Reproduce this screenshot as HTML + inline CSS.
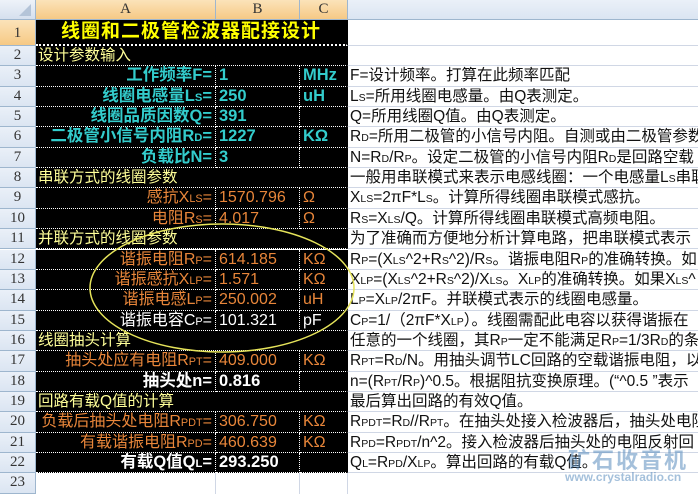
<!DOCTYPE html>
<html><head><meta charset="utf-8"><style>
*{margin:0;padding:0;box-sizing:border-box}
body{width:698px;height:490px;overflow:hidden;background:#fff;font-family:"Liberation Sans","Noto Sans CJK SC",sans-serif;position:relative}
.r{position:absolute;left:0;width:698px;display:flex}
.c{height:100%;overflow:visible;white-space:nowrap;font-size:15.5px;display:block;line-height:19px;position:relative}
.h{width:36px;background:linear-gradient(#eaf0f8,#dbe5f2);border-right:1px solid #9eb6ce;border-bottom:1px solid #9eb6ce;text-align:center;color:#333;font-family:"Liberation Serif",serif;font-size:15px}
.hs{background:linear-gradient(#fbe3b9,#f6c985);}
.a{width:180px;background:#000;border-right:1px dotted #fff;border-bottom:1px dotted #fff;text-align:right;padding-right:3px}
.b{width:84px;background:#000;border-right:1px dotted #fff;border-bottom:1px dotted #fff;padding-left:3px}
.cc{width:48px;background:#000;border-right:2px solid #000;border-bottom:1px dotted #fff;padding-left:3px}
.d{flex:1;border-bottom:1px solid #d0d7e5;padding-left:2px;color:#111;overflow:hidden;font-size:15.5px}
.sec{width:312px;background:#000;border-bottom:1px dotted #fff;color:#ffff99;padding-left:2px;border-right:2px solid #000}
.cy{color:#33cccc;font-weight:bold;font-size:16.5px}
.or{color:#e8863a;font-size:16px}
.wh{color:#fff;font-size:16px}
.whb{color:#fff;font-weight:bold;font-size:16.5px}
small{font-size:0.68em}
.top .c{line-height:19px;text-align:center;font-family:"Liberation Serif",serif;font-size:15px;color:#333}
</style></head><body>
<div class="r top" style="top:0;height:20px">
<div class="c h" style="background:linear-gradient(#eef3f9,#d5e0ee)"><svg width="12" height="12" style="position:absolute;right:4px;bottom:3px"><path d="M12 0L12 12L0 12Z" fill="#b4c4d8"/></svg></div>
<div class="c hs" style="width:180px;border-right:1px solid #9eb6ce;border-bottom:1px solid #9eb6ce">A</div>
<div class="c hs" style="width:84px;border-right:1px solid #9eb6ce;border-bottom:1px solid #9eb6ce">B</div>
<div class="c hs" style="width:48px;border-right:1px solid #9eb6ce;border-bottom:1px solid #9eb6ce">C</div>
<div class="c" style="flex:1;background:linear-gradient(#eaf0f8,#dbe5f2);border-bottom:1px solid #9eb6ce"></div>
</div>
<div class="r" style="top:20px;height:26px">
<div class="c h hs" style="line-height:26px">1</div>
<div class="c" style="width:312px;background:#000;text-align:center;line-height:24px;color:#ffff00;font-weight:bold;font-size:19px;letter-spacing:1px;border-bottom:2px dotted #fff;border-right:2px solid #000">线圈和二极管检波器配接设计</div>
<div class="c d"></div>
</div>
<div class="r" style="top:46px;height:20.35px"><div class="c h">2</div><div class="c sec">设计参数输入</div><div class="c d"></div></div>
<div class="r" style="top:66.35px;height:20.35px"><div class="c h">3</div><div class="c a cy">工作频率F=</div><div class="c b cy">1</div><div class="c cc cy">MHz</div><div class="c d">F=设计频率。打算在此频率匹配</div></div>
<div class="r" style="top:86.7px;height:20.35px"><div class="c h">4</div><div class="c a cy">线圈电感量L<small>S</small>=</div><div class="c b cy">250</div><div class="c cc cy">uH</div><div class="c d">L<small>S</small>=所用线圈电感量。由Q表测定。</div></div>
<div class="r" style="top:107.05px;height:20.35px"><div class="c h">5</div><div class="c a cy">线圈品质因数Q=</div><div class="c b cy">391</div><div class="c cc cy"></div><div class="c d">Q=所用线圈Q值。由Q表测定。</div></div>
<div class="r" style="top:127.4px;height:20.35px"><div class="c h">6</div><div class="c a cy">二极管小信号内阻R<small>D</small>=</div><div class="c b cy">1227</div><div class="c cc cy">KΩ</div><div class="c d">R<small>D</small>=所用二极管的小信号内阻。自测或由二极管参数</div></div>
<div class="r" style="top:147.75px;height:20.35px"><div class="c h">7</div><div class="c a cy">负载比N=</div><div class="c b cy">3</div><div class="c cc cy"></div><div class="c d">N=R<small>D</small>/R<small>P</small>。设定二极管的小信号内阻R<small>D</small>是回路空载</div></div>
<div class="r" style="top:168.1px;height:20.35px"><div class="c h">8</div><div class="c sec">串联方式的线圈参数</div><div class="c d">一般用串联模式来表示电感线圈：一个电感量L<small>S</small>串联</div></div>
<div class="r" style="top:188.45px;height:20.35px"><div class="c h">9</div><div class="c a or">感抗X<small>LS</small>=</div><div class="c b or">1570.796</div><div class="c cc or">Ω</div><div class="c d">X<small>LS</small>=2πF*L<small>S</small>。计算所得线圈串联模式感抗。</div></div>
<div class="r" style="top:208.8px;height:20.35px"><div class="c h">10</div><div class="c a or">电阻R<small>S</small>=</div><div class="c b or">4.017</div><div class="c cc or">Ω</div><div class="c d">R<small>S</small>=X<small>LS</small>/Q。计算所得线圈串联模式高频电阻。</div></div>
<div class="r" style="top:229.15px;height:20.35px"><div class="c h">11</div><div class="c sec">并联方式的线圈参数</div><div class="c d">为了准确而方便地分析计算电路，把串联模式表示</div></div>
<div class="r" style="top:249.5px;height:20.35px"><div class="c h">12</div><div class="c a or">谐振电阻R<small>P</small>=</div><div class="c b or">614.185</div><div class="c cc or">KΩ</div><div class="c d">R<small>P</small>=(X<small>LS</small>^2+R<small>S</small>^2)/R<small>S</small>。谐振电阻R<small>P</small>的准确转换。如</div></div>
<div class="r" style="top:269.85px;height:20.35px"><div class="c h">13</div><div class="c a or">谐振感抗X<small>LP</small>=</div><div class="c b or">1.571</div><div class="c cc or">KΩ</div><div class="c d">X<small>LP</small>=(X<small>LS</small>^2+R<small>S</small>^2)/X<small>LS</small>。X<small>LP</small>的准确转换。如果X<small>LS</small>^</div></div>
<div class="r" style="top:290.2px;height:20.35px"><div class="c h">14</div><div class="c a or">谐振电感L<small>P</small>=</div><div class="c b or">250.002</div><div class="c cc or">uH</div><div class="c d">L<small>P</small>=X<small>LP</small>/2πF。并联模式表示的线圈电感量。</div></div>
<div class="r" style="top:310.55px;height:20.35px"><div class="c h">15</div><div class="c a wh">谐振电容C<small>P</small>=</div><div class="c b wh">101.321</div><div class="c cc wh">pF</div><div class="c d">C<small>P</small>=1/（2πF*X<small>LP</small>）。线圈需配此电容以获得谐振在</div></div>
<div class="r" style="top:330.9px;height:20.35px"><div class="c h">16</div><div class="c sec">线圈抽头计算</div><div class="c d">任意的一个线圈，其R<small>P</small>一定不能满足R<small>P</small>=1/3R<small>D</small>的条</div></div>
<div class="r" style="top:351.25px;height:20.35px"><div class="c h">17</div><div class="c a or">抽头处应有电阻R<small>PT</small>=</div><div class="c b or">409.000</div><div class="c cc or">KΩ</div><div class="c d">R<small>PT</small>=R<small>D</small>/N。用抽头调节LC回路的空载谐振电阻，以</div></div>
<div class="r" style="top:371.6px;height:20.35px"><div class="c h">18</div><div class="c a whb">抽头处n=</div><div class="c b whb">0.816</div><div class="c cc"></div><div class="c d">n=(R<small>PT</small>/R<small>P</small>)^0.5。根据阻抗变换原理。(“^0.5 ”表示</div></div>
<div class="r" style="top:391.95px;height:20.35px"><div class="c h">19</div><div class="c sec">回路有载Q值的计算</div><div class="c d">最后算出回路的有效Q值。</div></div>
<div class="r" style="top:412.3px;height:20.35px"><div class="c h">20</div><div class="c a or">负载后抽头处电阻R<small>PDT</small>=</div><div class="c b or">306.750</div><div class="c cc or">KΩ</div><div class="c d">R<small>PDT</small>=R<small>D</small>//R<small>PT</small>。在抽头处接入检波器后，抽头处电阻</div></div>
<div class="r" style="top:432.65px;height:20.35px"><div class="c h">21</div><div class="c a or">有载谐振电阻R<small>PD</small>=</div><div class="c b or">460.639</div><div class="c cc or">KΩ</div><div class="c d">R<small>PD</small>=R<small>PDT</small>/n^2。接入检波器后抽头处的电阻反射回</div></div>
<div class="r" style="top:453px;height:20.35px"><div class="c h">22</div><div class="c a whb">有载Q值Q<small>L</small>=</div><div class="c b whb">293.250</div><div class="c cc"></div><div class="c d">Q<small>L</small>=R<small>PD</small>/X<small>LP</small>。算出回路的有载Q值。</div></div>
<div class="r" style="top:473.35px;height:20.35px"><div class="c h">23</div><div class="c" style="width:180px;border-right:1px solid #d0d7e5"></div><div class="c" style="width:84px;border-right:1px solid #d0d7e5"></div><div class="c" style="width:48px;border-right:1px solid #d0d7e5"></div><div class="c d" style="border:none"></div></div>
<svg width="698" height="490" style="position:absolute;left:0;top:0;pointer-events:none">
<ellipse cx="222" cy="288" rx="132" ry="64" fill="none" stroke="#e5e35a" stroke-width="1.5"/>
</svg>
<div style="position:absolute;left:568px;top:443px;color:rgba(90,140,190,0.55);font-weight:bold;font-size:22px;letter-spacing:2px">矿石收音机</div>
<div style="position:absolute;left:565px;top:470px;color:rgba(90,140,190,0.55);font-size:12px;font-weight:bold">www.crystalradio.cn</div>
</body></html>
